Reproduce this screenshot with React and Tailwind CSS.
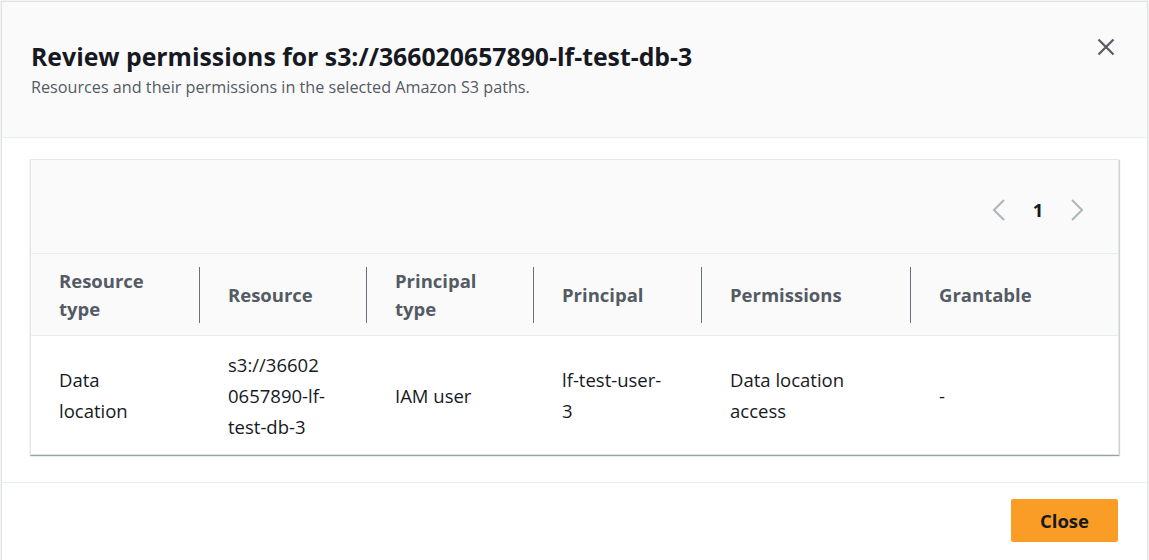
import React from 'react';

const columns = ['Resource type', 'Resource', 'Principal type', 'Principal', 'Permissions', 'Grantable'];

const rows = [
    {
        resourceType: 'Data location',
        resource: 's3://366020657890-lf-test-db-3',
        principalType: 'IAM user',
        principal: 'lf-test-user-3',
        permissions: 'Data location access',
        grantable: '-',
    },
];

const gridCols = 'grid grid-cols-[168px_167px_167px_168px_209px_1fr]';

const App = () => {
    return (
        <div className="w-[1149px] h-[560px] bg-[#f2f3f3] pt-[1px] pl-[1px] overflow-hidden" style={{ fontFamily: '"Open Sans", "Noto Sans", sans-serif' }}>
            <div className="w-[1147px] h-[600px] bg-white border border-[#dfe3e3]">
                {/* Header */}
                <div className="h-[136px] bg-[#fafafa] border-b border-[#eaeded] pl-[29px] pr-[31px] flex justify-between">
                    <div className="pt-[37px]">
                        <h2 className="text-[24.8px] leading-[34px] font-bold text-[#16191f]">
                            Review permissions for s3://366020657890-lf-test-db-3
                        </h2>
                        <p className="text-[16.2px] leading-[24px] text-[#545b64] mt-[2px]">
                            Resources and their permissions in the selected Amazon S3 paths.
                        </p>
                    </div>
                    <button className="mt-[35px] w-[20px] h-[20px] flex items-center justify-center text-[#545b64]">
                        <svg width="18" height="18" viewBox="0 0 18 18" fill="none" stroke="currentColor" strokeWidth="2.2">
                            <path d="M1.5 1.5 L16.5 16.5 M16.5 1.5 L1.5 16.5" />
                        </svg>
                    </button>
                </div>

                {/* Body */}
                <div className="px-[28px] pt-[21px] pb-[27px] border-b border-[#eaeded]">
                    <div className="border border-[#e4e7e7] shadow-[0_1px_1px_0_rgba(0,28,36,0.3),1px_1px_1px_0_rgba(0,28,36,0.15)]">
                        <div className="h-[93px] bg-[#fafafa] flex justify-end items-center pr-[34px] pt-[6px]">
                            <div className="flex items-center gap-[26px]">
                                <svg width="14" height="24" viewBox="0 0 14 24" fill="none" stroke="#aab7b8" strokeWidth="2">
                                    <path d="M12 2 L2 12 L12 22" />
                                </svg>
                                <span className="text-[18.5px] font-bold text-[#16191f] w-[12px] text-center">1</span>
                                <svg width="14" height="24" viewBox="0 0 14 24" fill="none" stroke="#aab7b8" strokeWidth="2">
                                    <path d="M2 2 L12 12 L2 22" />
                                </svg>
                            </div>
                        </div>
                        <div className={`${gridCols} h-[83px] bg-[#fafafa] border-t border-b border-[#eaeded] items-center`}>
                            {columns.map((col, i) => (
                                <div key={col} className="h-[56px] flex items-center">
                                    {i > 0 && <div className="w-px h-[56px] shrink-0 bg-[#687078]" />}
                                    <div className="pl-[28px] pr-[24px] text-[18.5px] leading-[28px] font-bold text-[#545b64]">
                                        {col}
                                    </div>
                                </div>
                            ))}
                        </div>
                        {rows.map((row, i) => (
                            <div key={i} className={`${gridCols} h-[118px] items-center text-[18.5px] leading-[31px] text-[#16191f]`}>
                                <div className="pl-[28px] pr-[30px]">{row.resourceType}</div>
                                <div className="pl-[29px] pr-[39px] break-words">{row.resource}</div>
                                <div className="pl-[29px] pr-[20px]">{row.principalType}</div>
                                <div className="pl-[29px] pr-[34px]">{row.principal}</div>
                                <div className="pl-[29px] pr-[50px]">{row.permissions}</div>
                                <div className="pl-[29px] pr-[20px]">{row.grantable}</div>
                            </div>
                        ))}
                    </div>
                </div>

                {/* Footer */}
                <div className="flex justify-end pr-[29px] pt-[16px]">
                    <button className="w-[107px] h-[43px] rounded-[2px] bg-[#f99d26] text-[#16191f] text-[18.5px] font-bold">
                        Close
                    </button>
                </div>
            </div>
        </div>
    );
};

export default App;
